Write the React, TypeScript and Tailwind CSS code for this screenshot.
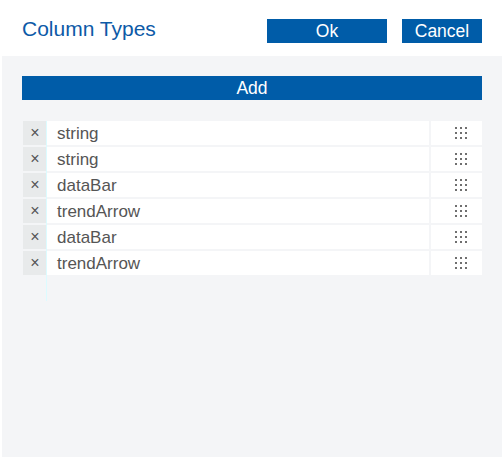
import React from "react";

const rows = ["string", "string", "dataBar", "trendArrow", "dataBar", "trendArrow"];

const Grip: React.FC = () => (
  <svg width="12" height="12" viewBox="0 0 12 12" className="text-[#6f6f6f] block" shapeRendering="crispEdges">
    {[0, 1, 2].map((r) =>
      [0, 1, 2].map((c) => (
        <rect key={`${r}-${c}`} x={c * 5} y={r * 5} width="2" height="2" fill="currentColor" />
      ))
    )}
  </svg>
);

export default function App() {
  return (
    <div
      className="w-[504px] h-[457px] bg-white flex flex-col overflow-hidden"
      style={{ fontFamily: '"Liberation Sans", Arial, sans-serif' }}
    >
      <div className="h-[56px] shrink-0 flex items-center px-[22px]">
        <h1 className="text-[21px] text-[#0d5aa7] leading-none mt-[1px]">Column Types</h1>
        <div className="ml-auto flex gap-[15px] mt-[6px]">
          <button className="w-[120px] h-[24px] bg-[#005ca8] text-white text-[17.5px] leading-none pt-[1px]">Ok</button>
          <button className="w-[80px] h-[24px] bg-[#005ca8] text-white text-[17.5px] leading-none pt-[1px]">Cancel</button>
        </div>
      </div>
      <div className="flex-1 mx-[2px] bg-[#f4f5f7] px-[20px] pt-[20px] relative">
        <button className="w-[460px] h-[24px] bg-[#005ca8] text-white text-[17.5px] leading-none pt-[1px]">Add</button>
        <div className="mt-[20px] ml-[1px] w-[459px] flex flex-col gap-[2px]">
          {rows.map((name, i) => (
            <div key={i} className="flex h-[24px] gap-[2px]">
              <button className="w-[24px] bg-[#e8eaeb] text-[#555] text-[16px] flex items-center justify-center pt-[1px]">
                ×
              </button>
              <div className="w-[382px] -ml-[2px] bg-white text-[#555] text-[17px] leading-[24px] pl-[10px] pt-[1px]">
                {name}
              </div>
              <div className="flex-1 bg-white flex items-center pl-[24px]">
                <Grip />
              </div>
            </div>
          ))}
        </div>
        <div className="absolute left-[44px] top-[65px] w-[1px] h-[180px] bg-[#dcfbff]" />
      </div>
    </div>
  );
}
